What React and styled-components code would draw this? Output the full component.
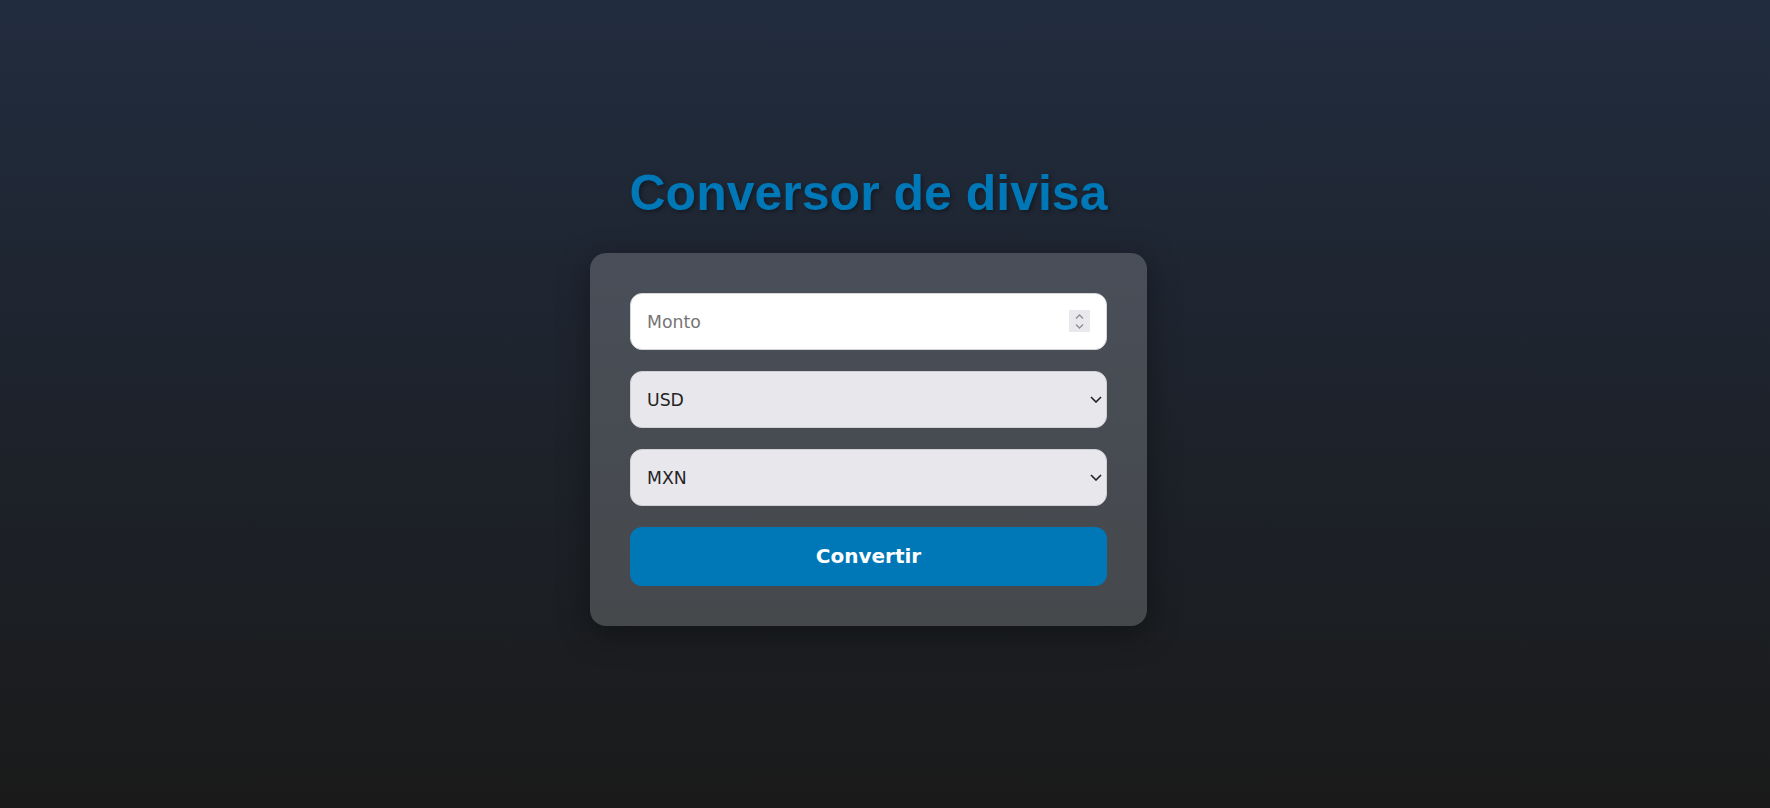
import React, { useState } from "react";
import styled, { createGlobalStyle } from "styled-components";

const GlobalStyle = createGlobalStyle`
  html, body {
    margin: 0;
    padding: 0;
  }
  body {
    background: linear-gradient(180deg, #212c3e 0%, #1a1a1a 100%);
    min-height: 100vh;
    font-family: "DejaVu Sans", "Liberation Sans", sans-serif;
  }
`;

const Page = styled.div`
  min-height: 100vh;
  box-sizing: border-box;
  display: flex;
  flex-direction: column;
  align-items: center;
  justify-content: center;
  padding: 0 33px 19px 0;
`;

const Title = styled.h1`
  margin: 0 0 31px;
  font-family: "Liberation Sans", Arial, sans-serif;
  font-size: 50px;
  font-weight: bold;
  color: #0077b6;
  text-shadow: 2px 2px 4px rgba(0, 0, 0, 0.35);
`;

const Card = styled.form`
  width: 557px;
  box-sizing: border-box;
  padding: 40px;
  background: rgba(255, 255, 255, 0.19);
  border-radius: 16px;
  box-shadow: 0 8px 32px rgba(0, 0, 0, 0.37);
  display: flex;
  flex-direction: column;
  gap: 21px;
`;

const Control = styled.div`
  position: relative;
  display: flex;
`;

const Field = styled.input`
  flex: 1;
  height: 57px;
  box-sizing: border-box;
  padding: 1px 44px 0 16px;
  border: 1px solid #d6d6da;
  border-radius: 12px;
  background: #ffffff;
  font-family: "DejaVu Sans", sans-serif;
  font-size: 17.3px;
  color: #222;
  outline: none;
  -moz-appearance: textfield;

  &::placeholder {
    color: #757575;
  }

  &::-webkit-inner-spin-button,
  &::-webkit-outer-spin-button {
    -webkit-appearance: none;
    margin: 0;
  }
`;

const Spinner = styled.div`
  position: absolute;
  right: 17px;
  top: 50%;
  transform: translateY(-50%);
  width: 21px;
  height: 22px;
  background: #e9e9ed;
  display: flex;
  flex-direction: column;
  align-items: center;
  justify-content: center;
  gap: 5px;
  pointer-events: none;
`;

const Select = styled.select`
  flex: 1;
  height: 57px;
  box-sizing: border-box;
  padding: 1px 32px 0 16px;
  border: 1px solid #d0cfd4;
  border-radius: 12px;
  background-color: #e8e7ec;
  font-family: "DejaVu Sans", sans-serif;
  font-size: 17.3px;
  color: #242424;
  outline: none;
  appearance: none;
  -webkit-appearance: none;
`;

const Arrow = styled.svg`
  position: absolute;
  right: 5px;
  top: 50%;
  margin-top: -3px;
  pointer-events: none;
`;

const Button = styled.button`
  height: 59px;
  border: none;
  border-radius: 12px;
  background: #0077b6;
  color: #ffffff;
  font-family: "DejaVu Sans", sans-serif;
  font-size: 20px;
  font-weight: bold;
  cursor: pointer;
`;

const currencies = ["USD", "MXN", "EUR", "GBP", "JPY", "CAD"];

function Chevron({ up }) {
  return (
    <svg width="9" height="5" viewBox="0 0 9 5">
      <path
        d={up ? "M1 4.5 L4.5 1 L8 4.5" : "M1 0.5 L4.5 4 L8 0.5"}
        fill="none"
        stroke="#8d8d92"
        strokeWidth="1.3"
      />
    </svg>
  );
}

function CurrencySelect({ value, onChange }) {
  return (
    <Control>
      <Select value={value} onChange={(e) => onChange(e.target.value)}>
        {currencies.map((c) => (
          <option key={c}>{c}</option>
        ))}
      </Select>
      <Arrow width="12" height="7" viewBox="0 0 12 7">
        <path d="M1 1 L6 6 L11 1" fill="none" stroke="#222" strokeWidth="1.6" />
      </Arrow>
    </Control>
  );
}

export default function App() {
  const [amount, setAmount] = useState("");
  const [from, setFrom] = useState("USD");
  const [to, setTo] = useState("MXN");

  return (
    <>
      <GlobalStyle />
      <Page>
        <Title>Conversor de divisa</Title>
        <Card onSubmit={(e) => e.preventDefault()}>
          <Control>
            <Field
              type="number"
              placeholder="Monto"
              value={amount}
              onChange={(e) => setAmount(e.target.value)}
            />
            <Spinner>
              <Chevron up />
              <Chevron />
            </Spinner>
          </Control>
          <CurrencySelect value={from} onChange={setFrom} />
          <CurrencySelect value={to} onChange={setTo} />
          <Button type="submit">Convertir</Button>
        </Card>
      </Page>
    </>
  );
}
